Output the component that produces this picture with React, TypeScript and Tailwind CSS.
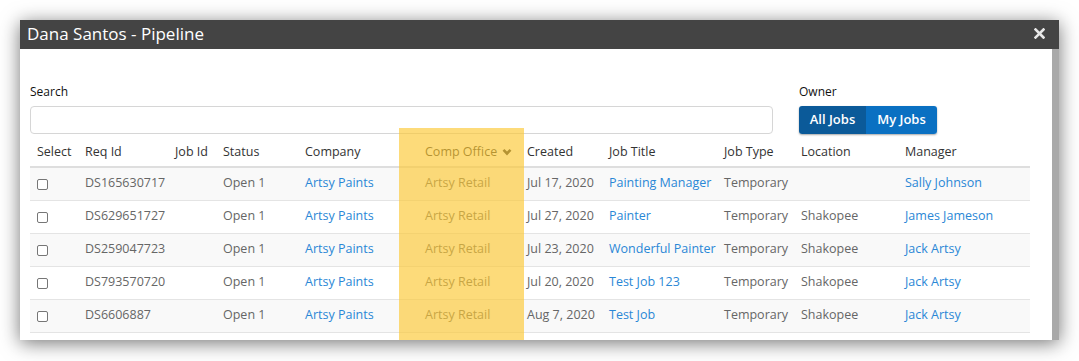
import React from "react";

const rows = [
  { req: "DS165630717", created: "Jul 17, 2020", title: "Painting Manager", loc: "", mgr: "Sally Johnson" },
  { req: "DS629651727", created: "Jul 27, 2020", title: "Painter", loc: "Shakopee", mgr: "James Jameson" },
  { req: "DS259047723", created: "Jul 23, 2020", title: "Wonderful Painter", loc: "Shakopee", mgr: "Jack Artsy" },
  { req: "DS793570720", created: "Jul 20, 2020", title: "Test Job 123", loc: "Shakopee", mgr: "Jack Artsy" },
  { req: "DS6606887", created: "Aug 7, 2020", title: "Test Job", loc: "Shakopee", mgr: "Jack Artsy" },
];

const cols = "grid grid-cols-[48px_90px_48px_82px_120px_102px_82px_115px_77px_104px_132px]";

export default function App() {
  return (
    <div
      className="relative w-[1079px] h-[361px] bg-white overflow-hidden pl-[20px] pt-[20px]"
      style={{ fontFamily: '"Open Sans", "Noto Sans", sans-serif' }}
    >
      <div className="w-[1039px] h-[320px] flex flex-col bg-white shadow-[0_3px_18px_rgba(0,0,0,0.55)]">
        <div className="h-[29px] bg-[#444444] flex items-center justify-between pl-[7px] pr-[14px] pb-[3px] shrink-0">
          <span className="text-white text-[17px] leading-none">Dana Santos - Pipeline</span>
          <svg width="11" height="11" viewBox="0 0 11 11">
            <path d="M1.5 1.5 L9.5 9.5 M9.5 1.5 L1.5 9.5" stroke="#e8e8e8" strokeWidth="2.6" strokeLinecap="square" />
          </svg>
        </div>
        <div className="flex flex-1 min-h-0">
          <div className="flex-1 min-w-0 overflow-hidden pl-[10px] pr-[22px] pt-[36px]">
            <div className="flex items-end">
              <div className="w-[743px] flex flex-col">
                <span className="text-[12px] font-medium text-[#111] leading-[14px]">Search</span>
                <div className="mt-[7px] h-[28px] border border-[#d6d6d6] rounded-[4px] bg-white" />
              </div>
              <div className="ml-[26px] flex flex-col">
                <span className="text-[12px] font-medium text-[#111] leading-[14px]">Owner</span>
                <div className="mt-[7px] flex h-[28px] rounded-[3px] overflow-hidden shadow-[0_1px_2px_rgba(0,0,0,0.35)]">
                  <div className="w-[67px] bg-[#0b5a99] text-white text-[13px] font-semibold flex items-center justify-center">All Jobs</div>
                  <div className="w-[71px] bg-[#0a70c2] text-white text-[13px] font-semibold flex items-center justify-center">My Jobs</div>
                </div>
              </div>
            </div>
            <div className="mt-[3px] w-[1000px] text-[12.5px]">
              <div className={`${cols} h-[31px] pt-[1px] border-b-2 border-[#dedede] items-center text-[#333] font-medium`}>
                <div className="pl-[7px]">Select</div>
                <div className="pl-[7px]">Req Id</div>
                <div className="pl-[7px]">Job Id</div>
                <div className="pl-[7px]">Status</div>
                <div className="pl-[7px]">Company</div>
                <div className="pl-[7px] flex items-center gap-[5px] whitespace-nowrap">
                  Comp Office
                  <svg width="10" height="8" viewBox="0 0 10 8">
                    <path d="M1.5 1.8 L5 5.5 L8.5 1.8" stroke="#333" strokeWidth="2.6" fill="none" />
                  </svg>
                </div>
                <div className="pl-[7px]">Created</div>
                <div className="pl-[7px]">Job Title</div>
                <div className="pl-[7px]">Job Type</div>
                <div className="pl-[7px]">Location</div>
                <div className="pl-[7px]">Manager</div>
              </div>
              {rows.map((r, i) => (
                <div
                  key={i}
                  className={`${cols} h-[33px] pb-[2px] border-b border-[#e4e4e4] items-center text-[#666] whitespace-nowrap ${i % 2 === 0 ? "bg-[#f9f9f9]" : "bg-white"}`}
                >
                  <div className="pl-[7px] pt-[2px] flex items-center">
                    <div className="w-[11px] h-[11px] border border-[#767676] rounded-[2px] bg-white" />
                  </div>
                  <div className="pl-[7px]">{r.req}</div>
                  <div className="pl-[7px]"></div>
                  <div className="pl-[7px]">Open 1</div>
                  <div className="pl-[7px] text-[#2a87d6]">Artsy Paints</div>
                  <div className="pl-[7px]">Artsy Retail</div>
                  <div className="pl-[7px]">{r.created}</div>
                  <div className="pl-[7px] text-[#2a87d6]">{r.title}</div>
                  <div className="pl-[7px]">Temporary</div>
                  <div className="pl-[7px]">{r.loc}</div>
                  <div className="pl-[7px] text-[#2a87d6]">{r.mgr}</div>
                </div>
              ))}
            </div>
          </div>
          <div className="w-[7px] bg-[#a9a9a9] shrink-0" />
        </div>
      </div>
      <div className="absolute left-[399px] top-[128px] w-[125px] h-[212px] bg-[#fcc832]/65 pointer-events-none" />
    </div>
  );
}
